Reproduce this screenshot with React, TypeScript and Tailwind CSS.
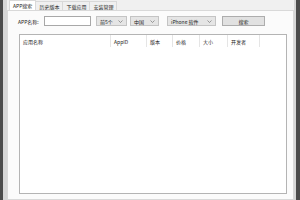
import React from 'react';

const font = { fontFamily: '"Noto Sans CJK SC", "Liberation Sans", sans-serif' };

const tabs = ['APP搜索', '历史版本', '下载应用', '安装管理'];

const columns = [
  { label: '应用名称', w: 'w-[91px]' },
  { label: 'AppID', w: 'w-[36px]' },
  { label: '版本', w: 'w-[26px]' },
  { label: '价格', w: 'w-[27px]' },
  { label: '大小', w: 'w-[28px]' },
  { label: '开发者', w: 'w-[32px]' },
];

function Combo({ text, w }: { text: string; w: string }) {
  return (
    <div className={`${w} h-[10px] flex items-center justify-between bg-[#e5e5e5] border border-[#c4c4c4] pl-[3px] pr-[3px]`}>
      <span className="text-[5px] leading-none text-[#222]">{text}</span>
      <svg width="5" height="3" viewBox="0 0 5 3" className="shrink-0">
        <path d="M0.5 0.5 L2.5 2.5 L4.5 0.5" stroke="#777" strokeWidth="0.7" fill="none" />
      </svg>
    </div>
  );
}

export default function App() {
  return (
    <div className="w-[300px] h-[200px] flex bg-[#f0f0f0] overflow-hidden" style={font}>
      <div className="w-[3px] bg-[#4b4b4b]" />
      <div className="w-[4px] bg-[#d6d6d6]" />
      <div className="flex-1 flex flex-col">
        {/* tab strip */}
        <div className="h-[10px] flex items-end pl-[2px] bg-[#f0f0f0]">
          {tabs.map((t, i) => (
            <div
              key={t}
              className={`h-[9px] px-[3px] flex items-center text-[5px] leading-none text-[#222] border border-b-0 border-[#d9d9d9] ${
                i === 0 ? 'bg-white h-[10px]' : 'bg-[#f0f0f0] -ml-px'
              }`}
            >
              {t}
            </div>
          ))}
        </div>
        {/* tab page */}
        <div className="flex-1 bg-[#fbfbfb] border border-[#d9d9d9] flex flex-col pl-[11px] pr-[6px] pt-[5px]">
          <div className="h-[10px] flex items-center">
            <span className="w-[26px] -ml-[1px] text-[5px] leading-none text-[#222]">APP名称:</span>
            <div className="w-[47px] h-[10px] bg-white border border-[#a8a8a8]" />
            <div className="w-[5px]" />
            <Combo text="前5个" w="w-[31px]" />
            <div className="w-[3px]" />
            <Combo text="中国" w="w-[29px]" />
            <div className="w-[8px]" />
            <Combo text="iPhone 软件" w="w-[49px]" />
            <div className="w-[6px]" />
            <div className="w-[43px] h-[10px] bg-[#e1e1e1] border border-[#adadad] flex items-center justify-center text-[5px] leading-none text-[#222]">
              搜索
            </div>
          </div>
          <div className="h-[8px]" />
          {/* list view */}
          <div className="w-[268px] h-[160px] bg-white border border-[#b4b4b4] flex flex-col">
            <div className="h-[12px] flex items-center">
              {columns.map((c) => (
                <div
                  key={c.label}
                  className={`${c.w} h-full flex items-center pl-[3px] border-r border-[#e5e5e5] text-[5px] leading-none text-[#222]`}
                >
                  {c.label}
                </div>
              ))}
            </div>
          </div>
        </div>
      </div>
      <div className="w-[2px] bg-[#d6d6d6]" />
      <div className="w-[4px] bg-[#4b4b4b]" />
    </div>
  );
}
